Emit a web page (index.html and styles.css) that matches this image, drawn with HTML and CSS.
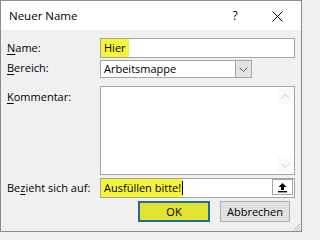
FILE: index.html
```
<!DOCTYPE html>
<html lang="de">
<head>
<meta charset="utf-8">
<title>Neuer Name</title>
<link rel="stylesheet" href="styles.css">
</head>
<body>
<div class="window">
  <div class="titlebar">
    <span class="title">Neuer Name</span>
    <span class="help">?</span>
    <span class="close">
      <svg width="11" height="11" viewBox="0 0 11 11"><path d="M0.5 0.5L10.5 10.5M10.5 0.5L0.5 10.5" stroke="#000" stroke-width="1" fill="none"/></svg>
    </span>
  </div>
  <div class="content">
    <div class="row row-name">
      <label class="label"><u>N</u>ame:</label>
      <div class="field input"><span class="hl">Hier</span></div>
    </div>
    <div class="row row-scope">
      <label class="label"><u>B</u>ereich:</label>
      <div class="field select">
        <span class="select-text">Arbeitsmappe</span>
        <span class="select-btn">
          <svg width="9" height="5" viewBox="0 0 9 5"><path d="M0.5 0.5L4.5 4.5L8.5 0.5" stroke="#606060" fill="none"/></svg>
        </span>
      </div>
    </div>
    <div class="row row-comment">
      <label class="label label-top"><u>K</u>ommentar:</label>
      <div class="field textarea">
        <div class="ta-body"></div>
        <div class="scrollbar">
          <span class="sb-btn">
            <svg width="9" height="5" viewBox="0 0 9 5"><path d="M0.5 4.5L4.5 0.5L8.5 4.5" stroke="#cdcdcd" fill="none"/></svg>
          </span>
          <span class="sb-btn">
            <svg width="9" height="5" viewBox="0 0 9 5"><path d="M0.5 0.5L4.5 4.5L8.5 0.5" stroke="#cdcdcd" fill="none"/></svg>
          </span>
        </div>
      </div>
    </div>
    <div class="row row-ref">
      <label class="label">Be<u>z</u>ieht sich auf:</label>
      <div class="field ref">
        <span class="hl hl-ref">Ausfüllen bitte!<span class="caret"></span></span>
        <span class="ref-btn">
          <svg width="11" height="11" viewBox="0 0 11 11"><path d="M5.5 1L1.5 5H4V8H7V5H9.5Z" fill="#000"/><rect x="1" y="9" width="9" height="1.4" fill="#000"/></svg>
        </span>
      </div>
    </div>
    <div class="buttons">
      <button class="btn btn-ok">OK</button>
      <button class="btn btn-cancel">Abbrechen</button>
    </div>
    <span class="grip">
      <svg width="10" height="10" viewBox="0 0 10 10"><path d="M9.5 2.5L2.5 9.5M9.5 5.5L5.5 9.5M9.5 8.5L8.5 9.5" stroke="#b0b0b0" fill="none"/></svg>
    </span>
  </div>
</div>
</body>
</html>
```
FILE: styles.css
```
html, body {
  margin: 0;
  padding: 0;
  background: #f0f0f0;
}
body {
  font-family: "Open Sans", "Noto Sans", "Liberation Sans", sans-serif;
  font-size: 11px;
  color: #000;
}
.window {
  width: 302px;
  height: 232px;
  box-sizing: border-box;
  border: 1px solid #8c8c8c;
  background: #f0f0f0;
  display: flex;
  flex-direction: column;
}
.titlebar {
  height: 29px;
  background: #fff;
  display: flex;
  align-items: center;
  padding-left: 8px;
  flex: none;
}
.title {
  flex: 1;
  font-size: 11.5px;
  line-height: 16px;
  margin-top: 1px;
}
.help {
  width: 12px;
  font-size: 12px;
  margin-right: 31px;
  text-align: center;
}
.close {
  width: 11px;
  height: 11px;
  display: flex;
  margin-right: 18px;
  margin-top: 1px;
}
.content {
  position: relative;
  flex: 1;
  padding: 8px 6px 0 6px;
  display: flex;
  flex-direction: column;
}
.row {
  display: flex;
  align-items: center;
}
.label {
  width: 93px;
  flex: none;
  line-height: 16px;
}
.label u {
  text-decoration-thickness: 1px;
  text-underline-offset: 2px;
}
.field {
  flex: 1;
  box-sizing: border-box;
  border: 1px solid #a5a5a5;
  background: #fff;
}
.row-name .field {
  height: 20px;
  display: flex;
  align-items: center;
}
.row-name .label {
  align-self: flex-start;
  margin-top: 2px;
}
.hl {
  background: #f5f53a;
  line-height: 18px;
  height: 18px;
  padding: 0 3px 0 3px;
}
.row-scope {
  margin-top: 2px;
}
.row-scope .label {
  align-self: flex-start;
  margin-top: 0px;
}
.select {
  height: 18px;
  display: flex;
  align-items: center;
  margin-right: 43px;
}
.select-text {
  flex: 1;
  padding-left: 3px;
  line-height: 16px;
}
.select-btn {
  width: 16px;
  height: 16px;
  box-sizing: border-box;
  border-left: 1px solid #a5a5a5;
  background: #e3e3e3;
  display: flex;
  align-items: center;
  justify-content: center;
}
.row-comment {
  margin-top: 8px;
  align-items: flex-start;
}
.label-top {
  margin-top: 3px;
}
.textarea {
  height: 89px;
  display: flex;
}
.ta-body {
  flex: 1;
}
.scrollbar {
  width: 17px;
  display: flex;
  flex-direction: column;
  justify-content: space-between;
  padding: 1px 0;
}
.sb-btn {
  height: 16px;
  display: flex;
  align-items: center;
  justify-content: center;
  background: #fafafa;
}
.row-ref {
  margin-top: 3px;
}
.ref {
  height: 20px;
  display: flex;
  align-items: center;
  padding-right: 1px;
}
.hl-ref {
  flex: none;
  padding: 0 0 0 3px;
}
.caret {
  display: inline-block;
  width: 1px;
  height: 14px;
  background: #000;
  vertical-align: -3px;
  margin-left: 1px;
}
.ref-btn {
  margin-left: auto;
  width: 21px;
  height: 16px;
  box-sizing: border-box;
  border: 1px solid #a5a5a5;
  background: #fff;
  display: flex;
  align-items: center;
  justify-content: center;
  align-self: flex-start;
}
.buttons {
  display: flex;
  margin-top: 3px;
  padding-left: 131px;
  align-items: flex-start;
}
.btn {
  font-family: inherit;
  font-size: 11px;
  color: #000;
  box-sizing: border-box;
  height: 21px;
  padding: 0;
  margin: 0;
  line-height: 17px;
}
.btn-ok {
  width: 72px;
  background: #e2e234;
  border: 2px solid #1f6f95;
}
.btn-cancel {
  width: 70px;
  margin-left: 10px;
  background: #e1e1e1;
  border: 1px solid #adadad;
}
.grip {
  position: absolute;
  right: 0;
  bottom: 0;
  width: 10px;
  height: 10px;
  display: flex;
}
```
